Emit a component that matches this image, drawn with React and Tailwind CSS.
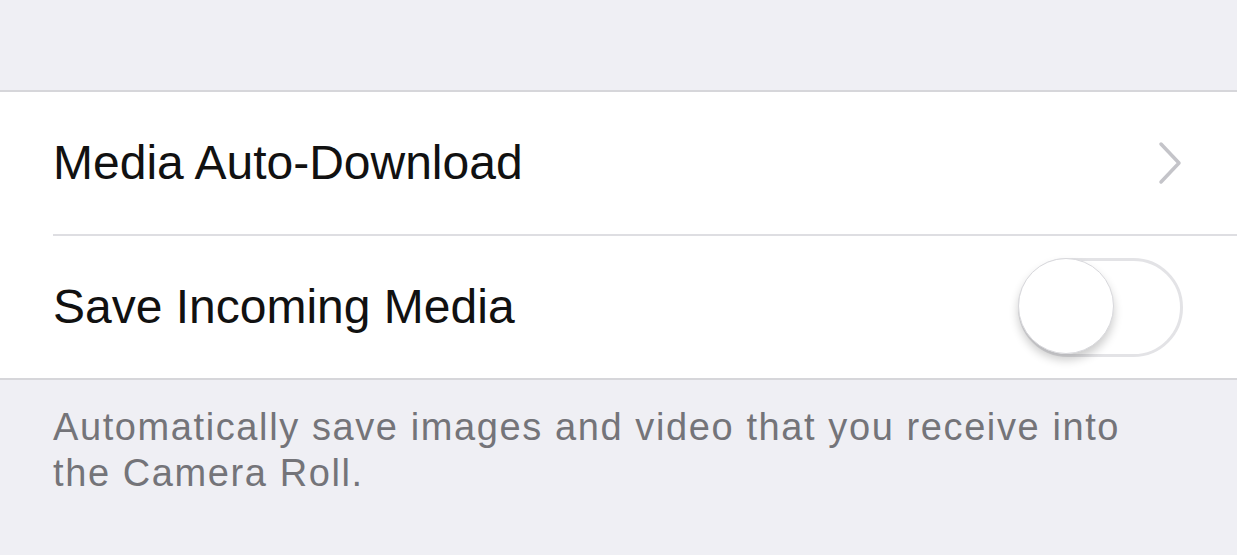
import { useState } from 'react';

function Chevron() {
  return (
    <svg width="26" height="44" viewBox="0 0 26 44" fill="none">
      <path d="M4 3 L22 22 L4 41" stroke="#c4c4c9" strokeWidth="3.5" strokeLinecap="round" strokeLinejoin="round" />
    </svg>
  );
}

function Toggle({ on, onChange }) {
  return (
    <button
      onClick={() => onChange(!on)}
      className={`relative w-[165px] h-[99px] rounded-full border-[3px] ${on ? 'bg-[#4cd964] border-[#4cd964]' : 'bg-white border-[#e3e3e6]'}`}
    >
      <span
        className={`absolute top-[-3px] ${on ? 'left-[66px]' : 'left-[-3px]'} w-[96px] h-[96px] rounded-full bg-white border border-[#d8d8dc] shadow-[0_6px_10px_rgba(0,0,0,0.2)]`}
      />
    </button>
  );
}

export default function App() {
  const [save, setSave] = useState(false);

  return (
    <div className="w-[1237px] h-[555px] overflow-hidden bg-[#efeff4] font-['Liberation_Sans',Arial,sans-serif]">
      <div className="h-[90px]" />

      {/* settings group */}
      <div className="bg-white border-y-2 border-[#d6d6da]">
        <div className="h-[142px] flex items-center justify-between pl-[53px] pr-[54px]">
          <span className="text-[48px] text-[#111]">Media Auto-Download</span>
          <Chevron />
        </div>
        <div className="ml-[53px] h-[2px] bg-[#dedee2]" />
        <div className="h-[142px] flex items-center justify-between pl-[53px] pr-[54px]">
          <span className="text-[48px] text-[#111]">Save Incoming Media</span>
          <Toggle on={save} onChange={setSave} />
        </div>
      </div>

      <p className="px-[53px] pt-[24px] text-[38px] leading-[46px] tracking-[1.6px] text-[#747479]">
        Automatically save images and video that you receive into the Camera Roll.
      </p>
    </div>
  );
}
